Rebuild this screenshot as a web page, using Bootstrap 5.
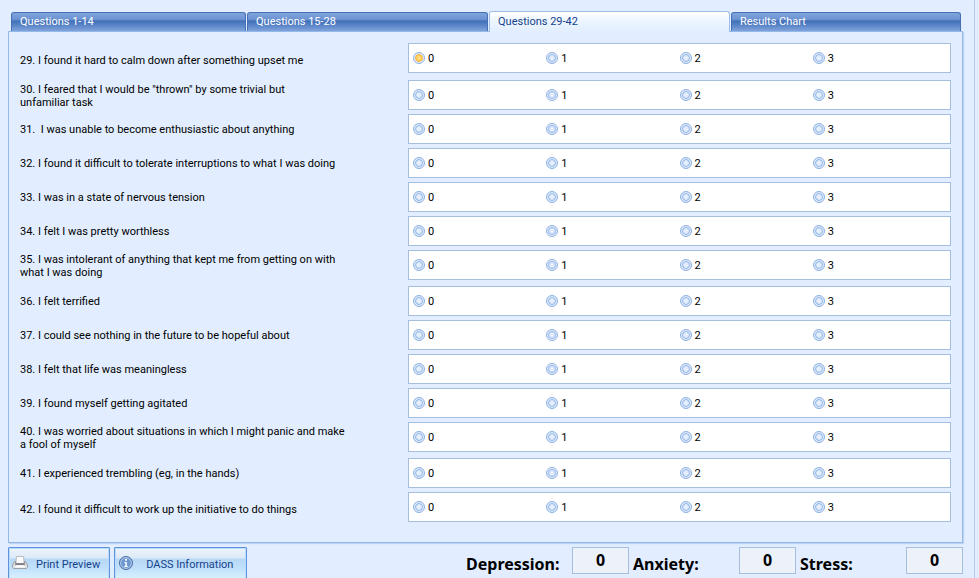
<!DOCTYPE html>
<html lang="en">
<head>
<meta charset="utf-8">
<meta name="viewport" content="width=device-width, initial-scale=1">
<title>DASS Questionnaire</title>
<link href="https://cdn.jsdelivr.net/npm/bootstrap@5.3.0/dist/css/bootstrap.min.css" rel="stylesheet">
<style>
  html, body { height: 100%; overflow: hidden; }
  body { background: #e2eeff; color: #000; font-family: Roboto, "Noto Sans", sans-serif; font-size: 11px; line-height: 13px; }
  .dass-frame { height: 100%; margin-right: 4px; padding: 11px 11px 0 8px; border-right: 1px solid #b0cbf5; }
  .dass-tabs { border: 0; padding: 0 2px 0 3px; align-items: flex-end; gap: 1px; flex-wrap: nowrap; }
  .dass-tabs .nav-item { flex: 241 1 0; }
  .dass-tabs .nav-item.first-tab { flex-grow: 235; }
  .dass-tabs .nav-item.last-tab { flex-grow: 230; }
  .dass-tabs .nav-link { display: block; width: 100%; height: 19px; margin: 0; padding: 0 8px; text-align: left; line-height: 18px; color: #fff; border: 1px solid #4570b5; border-bottom: 0; border-radius: 3px 3px 0 0; background: linear-gradient(#7fa3dc 0, #6d94d2 35%, #4170b8 45%, #5c86c8 70%, #80a4dc 100%); }
  .dass-tabs .nav-link:hover { color: #fff; }
  .dass-tabs .nav-link.active, .dass-tabs .nav-link.active:hover { height: 21px; line-height: 20px; margin-bottom: -1px; position: relative; color: #15428b; border-color: #9dbde9; background: linear-gradient(#fff, #eef6ff 40%, #e2eeff); }
  .dass-panel { border: 1px solid #94b8e8; box-shadow: 1px 1px 1px #bcd3f2; padding: 11px 11px 16px; }
  .question-row { margin-bottom: 4px; }
  .question-row.spaced { margin-bottom: 6px; }
  .question-row.first { margin-bottom: 7px; }
  .question-text { flex: 0 0 388px; }
  .question-text.low { padding-top: 4px; }
  .question-text.wrapped { padding-top: 2px; }
  .choices { flex: 1 1 0; height: 30px; padding: 0 4px; background: #fff; border: 1px solid #a6bfdf; }
  .choices .form-check { flex: 1 1 0; min-height: 0; margin: 0; padding: 0; gap: 3px; }
  .choices .form-check-input { float: none; width: 12px; height: 12px; margin: 0; border: 1px solid #8db1e3; background: radial-gradient(circle closest-side, #edf4fd 0, #d9e7f9 50%, #8fb2e3 66%, #dce9fb 84%); box-shadow: none; }
  .choices .form-check-input:checked { border-color: #90b2df; background: radial-gradient(circle closest-side, #ffe694 0, #ffc850 56%, #f3b348 70%, #e3eefc 86%); }
  .tool-btn { height: 36px; padding: 0 9px 4px 3px; font-size: 11px; color: #15428b; border: 1px solid #5c93dc; border-radius: 1px; box-shadow: inset 0 0 0 1px #bcdcff; background: linear-gradient(#eef5fd 0, #dce9f8 10px, #b7d8f6 11px, #c0e0fb 20px, #dff6ff 34px); }
  .tool-btn:hover { color: #15428b; border-color: #5c93dc; }
  .tool-btn span { padding-top: 4px; }
  .info-btn { padding-right: 13px; }
  .score-group { gap: 4px; font-family: "Noto Sans", sans-serif; font-size: 16px; line-height: 20px; font-weight: 700; }
  .score-group label { width: 102px; padding-top: 7px; white-space: nowrap; }
  .score-group .form-control { width: 57px; height: 27px; padding: 0 0 2px; text-align: center; font-family: inherit; font-size: 16px; line-height: 20px; font-weight: 700; color: #000; background: #edf1fa; border: 1px solid #a6bfdf; border-radius: 0; }
  .footer-row { padding-top: 4px; }
</style>
</head>
<body>
<main class="dass-frame">
  <ul class="nav nav-tabs dass-tabs" role="tablist">
    <li class="nav-item first-tab" role="presentation"><button class="nav-link" type="button" role="tab">Questions 1-14</button></li>
    <li class="nav-item" role="presentation"><button class="nav-link" type="button" role="tab">Questions 15-28</button></li>
    <li class="nav-item" role="presentation"><button class="nav-link active" type="button" role="tab" aria-selected="true">Questions 29-42</button></li>
    <li class="nav-item last-tab" role="presentation"><button class="nav-link" type="button" role="tab">Results Chart</button></li>
  </ul>
  <form class="dass-panel" id="questions"></form>
  <div class="footer-row d-flex justify-content-between align-items-start">
    <div class="d-flex gap-1">
      <button type="button" class="btn tool-btn d-flex align-items-center gap-2">
        <svg width="16" height="16" viewBox="0 0 16 16" aria-hidden="true">
          <path d="M4.500 1.500h7l.8 7H3.700z" fill="#fafafa" stroke="#a9abb0" stroke-width=".8"/>
          <path d="M2.500 6.500h1.300l-.5 3h9.400l-.5-3h1.300L15.500 10v2.500l-1 1H1.500l-1-1V10z" fill="#dedfe1" stroke="#8d8f94" stroke-width=".8"/>
          <path d="M3.700 8.300h8.600l.5 1.500H3.200z" fill="#77797e"/>
          <path d="M4 10.500h8l.8 2H3.200z" fill="#fff"/>
        </svg>
        <span>Print Preview</span>
      </button>
      <button type="button" class="btn tool-btn info-btn d-flex align-items-center gap-2">
        <svg width="20" height="16" viewBox="0 0 20 16" aria-hidden="true">
          <circle cx="8" cy="8" r="6.500" fill="#6f98cf" stroke="#4f6f9f"/>
          <circle cx="8" cy="8" r="5.400" fill="none" stroke="#b9d2f0" stroke-width=".9"/>
          <circle cx="8" cy="4.800" r="1.100" fill="#fff"/>
          <path d="M6.500 7h2.300v4h1v1H6.300v-1h1V8h-.8z" fill="#fff"/>
        </svg>
        <span>DASS Information</span>
      </button>
    </div>
    <div class="d-flex gap-1">
      <div class="score-group d-flex align-items-start"><label for="depression">Depression:</label><input class="form-control" id="depression" value="0" readonly></div>
      <div class="score-group d-flex align-items-start"><label for="anxiety">Anxiety:</label><input class="form-control" id="anxiety" value="0" readonly></div>
      <div class="score-group d-flex align-items-start"><label for="stress">Stress:</label><input class="form-control" id="stress" value="0" readonly></div>
    </div>
  </div>
</main>
<script src="https://cdn.jsdelivr.net/npm/bootstrap@5.3.0/dist/js/bootstrap.bundle.min.js"></script>
<script>
  const questions = [
    ["29. I found it hard to calm down after something upset me", "low", "first"],
    ["30. I feared that I would be \"thrown\" by some trivial but<br>unfamiliar task", "wrapped"],
    ["31.&nbsp; I was unable to become enthusiastic about anything"],
    ["32. I found it difficult to tolerate interruptions to what I was doing"],
    ["33. I was in a state of nervous tension"],
    ["34. I felt I was pretty worthless"],
    ["35. I was intolerant of anything that kept me from getting on with<br>what I was doing", "wrapped", "spaced"],
    ["36. I felt terrified"],
    ["37. I could see nothing in the future to be hopeful about"],
    ["38. I felt that life was meaningless"],
    ["39. I found myself getting agitated"],
    ["40. I was worried about situations in which I might panic and make<br>a fool of myself", "wrapped", "spaced"],
    ["41. I experienced trembling (eg, in the hands)"],
    ["42. I found it difficult to work up the initiative to do things", "low"]
  ];
  document.getElementById("questions").innerHTML = questions.map(([text, align = "", spacing = ""], i) => {
    const n = 29 + i;
    const radios = [0, 1, 2, 3].map(v =>
      `<div class="form-check d-flex align-items-center"><input class="form-check-input" type="radio" name="q${n}" id="q${n}-${v}" value="${v}"${n === 29 && v === 0 ? " checked" : ""}><label for="q${n}-${v}">${v}</label></div>`).join("");
    return `<div class="question-row d-flex align-items-center ${spacing}" role="radiogroup" aria-labelledby="t${n}"><div class="question-text ${align}" id="t${n}">${text}</div><div class="choices d-flex align-items-center">${radios}</div></div>`;
  }).join("");
</script>
</body>
</html>
